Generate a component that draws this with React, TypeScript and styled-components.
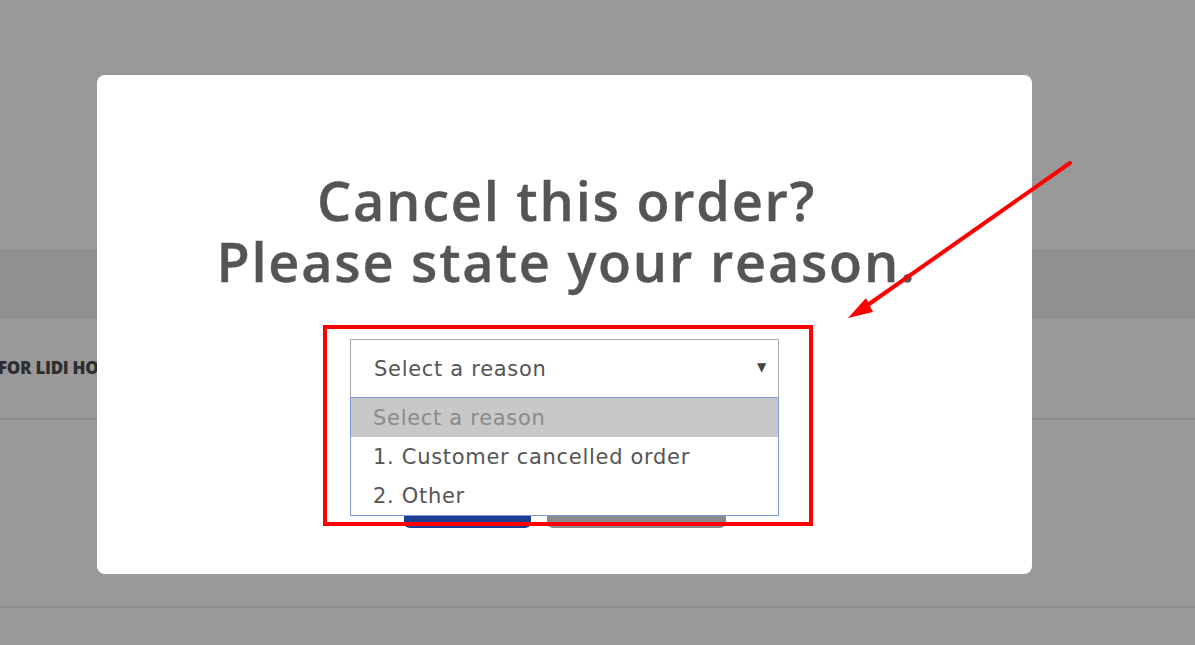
import React, { useState } from "react";
import styled, { createGlobalStyle } from "styled-components";

const GlobalStyle = createGlobalStyle`
  html, body {
    margin: 0;
    padding: 0;
    background: #999999;
    font-family: "DejaVu Sans", "Open Sans", sans-serif;
    overflow: hidden;
  }
  #root {
    width: 1195px;
    height: 645px;
    position: relative;
  }
`;

const Page = styled.div`
  width: 1195px;
  height: 645px;
  display: flex;
  flex-direction: column;
  padding-top: 250px;
  box-sizing: border-box;
`;

interface RowProps {
  height: number;
  shade?: boolean;
}

const Row = styled.div<RowProps>`
  height: ${({ height }) => height}px;
  border-top: 2px solid #8c8c8c;
  background: ${({ shade }) => (shade ? "#919191" : "#999999")};
  display: flex;
  align-items: center;
  box-sizing: border-box;
`;

const RowLabel = styled.span`
  font-family: "Open Sans", sans-serif;
  font-weight: 800;
  font-size: 17px;
  color: #2e2e2e;
  margin-left: -2px;
  letter-spacing: -0.3px;
`;

const Modal = styled.div`
  position: absolute;
  left: 97px;
  top: 75px;
  width: 935px;
  height: 499px;
  background: #ffffff;
  border-radius: 8px;
  display: flex;
  flex-direction: column;
  align-items: center;
  padding-top: 95px;
  box-sizing: border-box;
`;

const Title = styled.h1`
  margin: 0 0 0 4px;
  font-family: "Open Sans", sans-serif;
  font-weight: 600;
  font-size: 54px;
  line-height: 61px;
  color: #555555;
  text-align: center;
  letter-spacing: 1.8px;
  -webkit-text-stroke: 0.4px #555555;
`;

const TitleLine = styled.span`
  display: block;
  height: 61px;
`;

const SelectWrap = styled.div`
  position: relative;
  width: 429px;
  margin-top: 47px;
`;

const SelectBox = styled.div`
  height: 59px;
  border: 1px solid #aaaaaa;
  box-sizing: border-box;
  display: flex;
  align-items: center;
  justify-content: space-between;
  padding: 0 11px 0 23px;
  font-size: 21px;
  letter-spacing: 0.7px;
  color: #555555;
  cursor: pointer;
`;

const Caret = styled.span`
  font-size: 12px;
  color: #444444;
  margin-top: -4px;
`;

const OptionList = styled.ul`
  position: absolute;
  left: 0;
  right: 0;
  top: 58px;
  margin: 0;
  padding: 0;
  list-style: none;
  background: #ffffff;
  border: 1px solid #7f9bdc;
  z-index: 2;
`;

interface OptionProps {
  active?: boolean;
}

const Option = styled.li<OptionProps>`
  height: 39px;
  display: flex;
  align-items: center;
  padding-left: 22px;
  font-size: 21px;
  letter-spacing: 0.7px;
  color: ${({ active }) => (active ? "#8a8a8a" : "#555555")};
  background: ${({ active }) => (active ? "#c8c8c8" : "transparent")};
`;

const Buttons = styled.div`
  display: flex;
  gap: 16px;
  margin-top: 90px;
`;

interface ButtonProps {
  tone: "primary" | "muted";
  width: number;
}

const Button = styled.button<ButtonProps>`
  width: ${({ width }) => width}px;
  height: 40px;
  border: none;
  border-radius: 6px;
  background: ${({ tone }) => (tone === "primary" ? "#1c3f94" : "#8a8a8a")};
`;

const Highlight = styled.div`
  position: absolute;
  left: 323px;
  top: 325px;
  width: 490px;
  height: 201px;
  border: 4px solid #ff0000;
  box-sizing: border-box;
  z-index: 5;
`;

const Arrow = styled.svg`
  position: absolute;
  left: 0;
  top: 0;
  z-index: 5;
  pointer-events: none;
`;

const reasons = ["Select a reason", "1. Customer cancelled order", "2. Other"];

function App() {
  const [selected] = useState(0);

  return (
    <>
      <GlobalStyle />
      <Page>
        <Row height={67} shade />
        <Row height={104}>
          <RowLabel>FOR LIDI HOME</RowLabel>
        </Row>
        <Row height={191} />
        <Row height={40} />
      </Page>
      <Modal>
        <Title>
          <TitleLine>Cancel this order?</TitleLine>
          <TitleLine>Please state your reason.</TitleLine>
        </Title>
        <SelectWrap>
          <SelectBox>
            {reasons[selected]}
            <Caret>▼</Caret>
          </SelectBox>
          <OptionList>
            {reasons.map((r, i) => (
              <Option key={r} active={i === selected}>
                {r}
              </Option>
            ))}
          </OptionList>
        </SelectWrap>
        <Buttons>
          <Button tone="primary" width={127} aria-label="Submit" />
          <Button tone="muted" width={179} aria-label="Close" />
        </Buttons>
      </Modal>
      <Highlight />
      <Arrow width="1195" height="645" viewBox="0 0 1195 645">
        <line x1="1070" y1="163" x2="862" y2="309" stroke="#ff0000" strokeWidth="4" strokeLinecap="round" />
        <polygon points="848,318 866,298 873,312" fill="#ff0000" />
      </Arrow>
    </>
  );
}

export default App;
